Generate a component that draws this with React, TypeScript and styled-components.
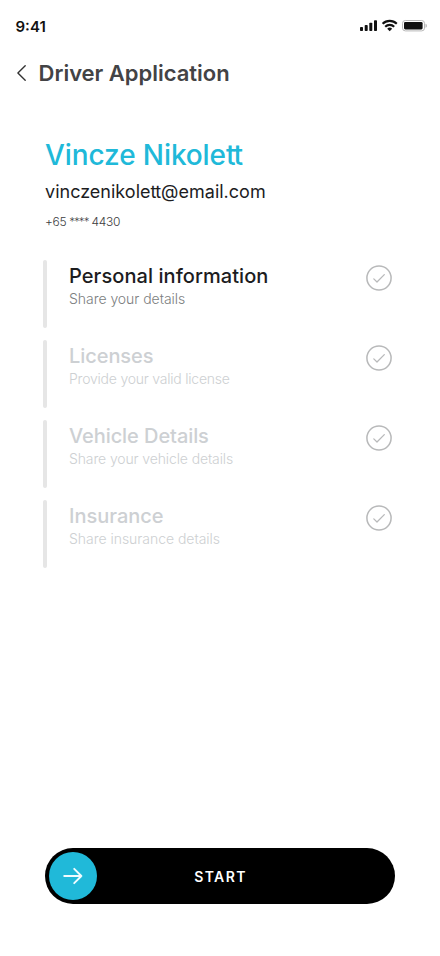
import React from "react";
import styled, { createGlobalStyle } from "styled-components";

const GlobalStyle = createGlobalStyle`
  * { box-sizing: border-box; }
  body { margin: 0; background: #fff; }
  h1, h2, h3, p { margin: 0; font-weight: inherit; }
`;

const Screen = styled.main`
  display: flex;
  flex-direction: column;
  width: 440px;
  height: 956px;
  padding-bottom: 52px;
  overflow: hidden;
  background: #fff;
  font-family: Inter, "Noto Sans", sans-serif;
  white-space: nowrap;
`;

const StatusBar = styled.div`
  display: flex;
  align-items: center;
  justify-content: space-between;
  height: 53px;
  padding: 0 13px 0 15.5px;
`;

const Time = styled.time`
  font-size: 15px;
  font-weight: 600;
  line-height: 20px;
  color: #111;
`;

const StatusIcons = styled.svg`
  display: block;
  width: 68px;
  height: 14px;
  margin-top: -1px;
`;

const Header = styled.header`
  display: flex;
  align-items: center;
  height: 40px;
  padding-left: 16px;
`;

const BackButton = styled.button`
  display: flex;
  width: 22.6px;
  height: 20px;
  padding: 0;
  border: 0;
  background: none;
`;

const PageTitle = styled.h1`
  font-size: 22px;
  font-weight: 600;
  line-height: 30px;
  letter-spacing: -0.02px;
  color: #434345;
`;

const Profile = styled.section`
  display: flex;
  flex-direction: column;
  padding: 42px 45px 0;
`;

const Name = styled.h2`
  font-size: 28px;
  font-weight: 500;
  line-height: 40px;
  letter-spacing: -0.1px;
  color: #20b9d9;
`;

const Email = styled.p`
  font-size: 18px;
  font-weight: 400;
  line-height: 33px;
  letter-spacing: 0.01px;
  color: #1d1d1f;
`;

/* Draws a double t with its crossbars joined. */
const JoinedT = styled.span`
  letter-spacing: -0.07em;
`;

const Phone = styled.p`
  font-size: 12px;
  font-weight: 300;
  line-height: 27px;
  letter-spacing: -0.3px;
  color: #3c3c3e;
`;

const Mask = styled.span`
  font-size: 11.5px;
  letter-spacing: -1px;
`;

const StepList = styled.ul`
  display: flex;
  flex-direction: column;
  gap: 12px;
  margin: 24px 0 0;
  padding: 0 48px 0 43px;
  list-style: none;
`;

const StepRow = styled.li`
  display: flex;
  height: 68px;
`;

const StepBar = styled.span`
  width: 4px;
  margin-right: 22px;
  border-radius: 2px;
  background: #e6e6e6;
`;

const StepText = styled.div`
  flex: 1;
  padding-top: 3px;
`;

const StepTitle = styled.h3<{ $active: boolean; $tracking: number }>`
  font-size: 20px;
  font-weight: 500;
  line-height: 26px;
  letter-spacing: ${(p) => p.$tracking}px;
  color: ${(p) => (p.$active ? "#1c1c1e" : "#cdd0d3")};
`;

const StepHint = styled.p<{ $active: boolean; $tracking: number }>`
  font-size: 14px;
  font-weight: 300;
  line-height: 20px;
  letter-spacing: ${(p) => p.$tracking}px;
  color: ${(p) => (p.$active ? "#7c7e80" : "#cdd0d2")};
`;

const StepCheck = styled.svg`
  display: block;
  flex: none;
  width: 26px;
  height: 26px;
  margin: 5px 0 0;
`;

const StartSlider = styled.button`
  display: grid;
  grid-template-columns: 48px 1fr 48px;
  align-items: center;
  width: 350px;
  height: 56px;
  margin: auto auto 0;
  padding: 4px;
  border: 0;
  border-radius: 28px;
  background: #000;
  font-family: inherit;
`;

const Knob = styled.span`
  display: flex;
  align-items: center;
  justify-content: center;
  width: 48px;
  height: 48px;
  border-radius: 50%;
  background: #20b9d9;
`;

const StartLabel = styled.span`
  padding: 2px 0 0 1px;
  font-size: 14px;
  font-weight: 600;
  line-height: 20px;
  letter-spacing: 1.39px;
  text-align: center;
  color: #fff;
`;

interface Step {
  title: string;
  hint: string;
  active: boolean;
  titleTracking: number;
  hintTracking: number;
}

const steps: Step[] = [
  { title: "Personal information", hint: "Share your details", active: true, titleTracking: 0.07, hintTracking: -0.04 },
  { title: "Licenses", hint: "Provide your valid license", active: false, titleTracking: -0.06, hintTracking: -0.22 },
  { title: "Vehicle Details", hint: "Share your vehicle details", active: false, titleTracking: -0.07, hintTracking: -0.12 },
  { title: "Insurance", hint: "Share insurance details", active: false, titleTracking: 0, hintTracking: -0.03 },
];

export default function App() {
  return (
    <>
      <GlobalStyle />
      <Screen>
        <StatusBar>
          <Time>9:41</Time>
          <StatusIcons viewBox="0 0 68 14">
            <g fill="#111">
              <rect x="1" y="8" width="3" height="4" rx="0.8" />
              <rect x="5.7" y="6" width="3" height="6" rx="0.8" />
              <rect x="10.3" y="3.7" width="3" height="8.3" rx="0.8" />
              <rect x="15" y="1.3" width="3" height="10.7" rx="0.8" />
              <path d="M30.7 12.2 28.2 9.8a3.5 3.5 0 0 1 5 0z" />
            </g>
            <g fill="none" stroke="#111" strokeWidth="2.1">
              <path d="M23.6 4.8a10.2 10.2 0 0 1 14.2 0" />
              <path d="M26.2 7.7a6.5 6.5 0 0 1 9 0" />
            </g>
            <rect x="43.5" y="1.5" width="22" height="10.4" rx="2.8" fill="none" stroke="#b8b8b8" />
            <rect x="45" y="3" width="18.6" height="7.4" rx="1.3" fill="#111" />
            <path d="M66.5 4.8v4c1-.4 1.4-1.1 1.4-2s-.5-1.6-1.4-2z" fill="#b8b8b8" />
          </StatusIcons>
        </StatusBar>

        <Header>
          <BackButton aria-label="Back">
            <svg width="12" height="20" viewBox="0 0 12 20" fill="none" stroke="#333" strokeWidth="1.4">
              <path d="M9.2 2.8 1.9 10l7.3 7.2" strokeLinecap="round" strokeLinejoin="round" />
            </svg>
          </BackButton>
          <PageTitle>Driver Application</PageTitle>
        </Header>

        <Profile>
          <Name>Vincze Nikole<JoinedT>t</JoinedT>t</Name>
          <Email>vinczenikole<JoinedT>t</JoinedT>t@email.com</Email>
          <Phone>+65 <Mask>****</Mask> 4430</Phone>
        </Profile>

        <StepList>
          {steps.map((step) => (
            <StepRow key={step.title}>
              <StepBar />
              <StepText>
                <StepTitle $active={step.active} $tracking={step.titleTracking}>{step.title}</StepTitle>
                <StepHint $active={step.active} $tracking={step.hintTracking}>{step.hint}</StepHint>
              </StepText>
              <StepCheck viewBox="0 0 26 26" fill="none" stroke="#b8b9ba" strokeLinecap="round" strokeLinejoin="round">
                <circle cx="13" cy="13" r="12.1" strokeWidth="1.5" />
                <path d="M7.8 13.9 11 17l7.3-7.4" strokeWidth="1.3" />
              </StepCheck>
            </StepRow>
          ))}
        </StepList>

        <StartSlider>
          <Knob>
            <svg width="24" height="24" viewBox="0 0 24 24" fill="none" stroke="#f0fcff" strokeWidth="1.9" strokeLinecap="round" strokeLinejoin="round">
              <path d="M3.2 12h17.2M13.2 4.8l7.2 7.2-7.2 7.2" />
            </svg>
          </Knob>
          <StartLabel>START</StartLabel>
        </StartSlider>
      </Screen>
    </>
  );
}
